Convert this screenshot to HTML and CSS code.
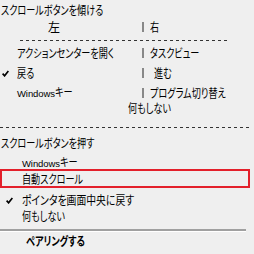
FILE: index.html
```html
<!DOCTYPE html>
<html lang="ja">
<head>
<meta charset="utf-8">
<link rel="stylesheet" href="styles.css">
</head>
<body>
<div class="panel">
  <div class="title t1"><span class="c">スクロールボタンを傾ける</span></div>
  <div class="grid lr">
    <span class="chk"></span><span class="l left-h">左</span><span class="bar"></span><span class="r c">右</span>
  </div>
  <div class="dash dash-short"></div>
  <div class="grid ra">
    <span class="chk"></span><span class="l c">アクションセンターを開く</span><span class="bar"></span><span class="r c">タスクビュー</span>
  </div>
  <div class="grid rb">
    <span class="chk"><svg width="7" height="7" viewBox="0 0 7 7"><path d="M0.6 3.6 L2.6 5.8 L6.4 1" fill="none" stroke="#000" stroke-width="1.7"/></svg></span><span class="l c">戻る</span><span class="bar"></span><span class="r r-pad"><span class="c">進む</span></span>
  </div>
  <div class="grid rc">
    <span class="chk"></span><span class="l"><span class="latin">Windows</span><span class="c">キー</span></span><span class="bar"></span><span class="r c">プログラム切り替え</span>
  </div>
  <div class="none-row"><span class="c">何もしない</span></div>
  <div class="dash dash-full"></div>
  <div class="title t2"><span class="c">スクロールボタンを押す</span></div>
  <div class="item win2"><span class="latin">Windows</span><span class="c">キー</span></div>
  <div class="item selected"><span class="c">自動スクロール</span></div>
  <div class="item checked"><span class="chk2"><svg width="7" height="7" viewBox="0 0 7 7"><path d="M0.6 3.6 L2.6 5.8 L6.4 1" fill="none" stroke="#000" stroke-width="1.7"/></svg></span><span class="c wide">ポインタを画面中央に戻す</span></div>
  <div class="item"><span class="c">何もしない</span></div>
  <div class="sep"></div>
  <div class="pair"><span class="c">ペアリングする</span></div>
</div>
</body>
</html>
```
FILE: styles.css
```css
html, body {
  margin: 0;
  padding: 0;
}
body {
  width: 254px;
  height: 254px;
  overflow: hidden;
  background: #efefef;
  color: #000;
  font-family: "Noto Sans CJK JP", "Noto Sans", sans-serif;
  font-size: 12px;
  font-feature-settings: "palt";
}
.panel {
  display: flex;
  flex-direction: column;
  width: 254px;
  height: 254px;
}
.c {
  display: inline-block;
  transform: scaleX(0.76);
  transform-origin: left center;
  white-space: nowrap;
}
.c.wide {
  transform: scaleX(0.82);
}
.title {
  height: 20px;
  line-height: 20px;
  padding-left: 1px;
  white-space: nowrap;
}
.t2 {
  margin-top: 6px;
  height: 18px;
  line-height: 18px;
}
.grid {
  display: grid;
  grid-template-columns: 17px 125px 8px auto;
  align-items: center;
  height: 16px;
  line-height: 16px;
  white-space: nowrap;
}
.lr { height: 14px; line-height: 14px; }
.ra { margin-top: 4px; }
.rb { margin-top: 4px; }
.rc { margin-top: 3px; }
.chk {
  display: flex;
  align-items: center;
  padding-left: 2px;
}
.left-h { padding-left: 31px; }
.bar {
  width: 2px;
  height: 10px;
  background: #888;
}
.r-pad { padding-left: 4px; }
.latin {
  font-family: "Liberation Sans", sans-serif;
  font-size: 9.5px;
  letter-spacing: -0.1px;
}
.none-row {
  height: 16px;
  line-height: 16px;
  padding-left: 128px;
}
.dash {
  height: 1px;
  background: repeating-linear-gradient(to right, #333 0 3px, transparent 3px 6px);
}
.dash-short {
  margin-top: 6px;
  margin-left: 20px;
  width: 210px;
}
.dash-full {
  margin-top: 11px;
  width: 250px;
}
.item {
  height: 16px;
  line-height: 16px;
  padding-left: 22px;
  white-space: nowrap;
}
.win2 {
  margin-top: 3px;
  height: 14px;
  line-height: 14px;
}
.selected {
  height: 15px;
  line-height: 15px;
  width: 226px;
  border: 2px solid #e3202b;
  padding-left: 20px;
}
.checked {
  margin-top: 4px;
  display: flex;
  align-items: center;
  padding-left: 6px;
}
.chk2 {
  display: flex;
  width: 16px;
}
.sep {
  margin-top: 5px;
  width: 246px;
  height: 2px;
  background: #a0a0a0;
  border-bottom: 1px solid #ffffff;
}
.pair {
  margin-top: 1px;
  height: 16px;
  line-height: 16px;
  padding-left: 26px;
  font-weight: bold;
}
```
